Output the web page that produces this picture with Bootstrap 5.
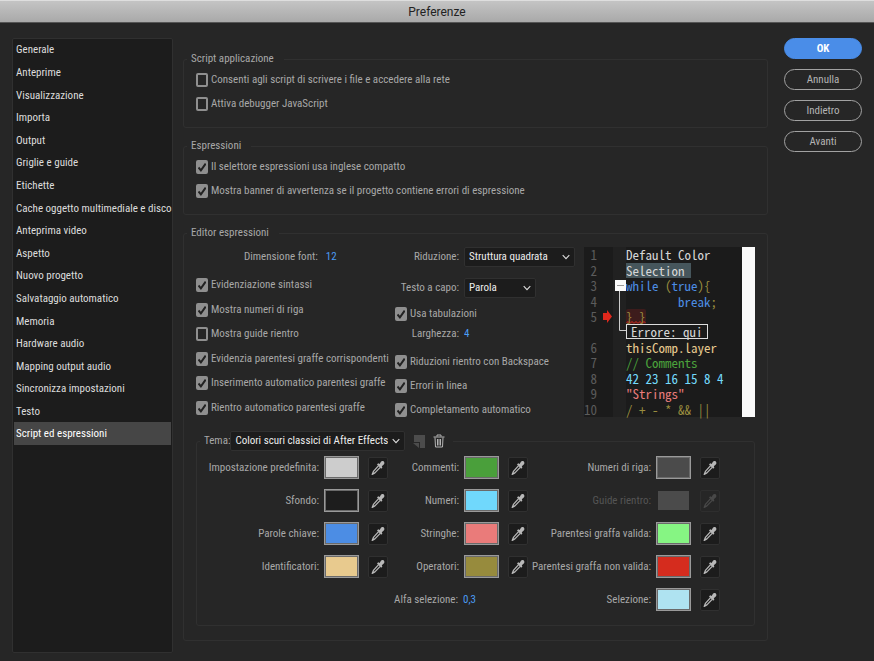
<!DOCTYPE html>
<html lang="it">
<head>
<meta charset="utf-8">
<meta name="viewport" content="width=device-width, initial-scale=1">
<title>Preferenze</title>
<link rel="stylesheet" href="https://cdn.jsdelivr.net/npm/bootstrap@5.3.0/dist/css/bootstrap.min.css">
<style>
:root{--panel:#262626;--well:#1c1c1c;--edge:#303030;--ink:#a8a8a8;--bright:#dcdcdc;--link:#4b9cf5}
body{background:var(--panel);color:var(--ink);font:11px/16px "Roboto Condensed","Open Sans",sans-serif}
.titlebar{height:23px;background:linear-gradient(#c4c4c4,#a9a9a9);border-top:1px solid #dedede;border-bottom:1px solid #555;color:#222;font:12px/22px Roboto,sans-serif}
.dialog{padding:15px 12px 8px}
.sidebar{flex:0 0 161px;min-width:0;background:var(--well);border:1px solid var(--edge);border-radius:2px;padding:0 1px}
.sections{height:406px}
.sections a{flex:1;padding:0 2px;border:0;background:none;color:var(--bright);white-space:nowrap;border-radius:0}
.sections a.active{background:#464646}
.content{margin:13px 16px 0 10px;gap:10px}
.group{border:1px solid var(--edge);border-radius:3px;padding:0 3px}
.group>legend{font-size:11px;line-height:16px;padding:0 10px 0 4px;margin:0}
.opts{padding:1px 9px 11px}
.form-check{min-height:24px;padding:0;margin:0;gap:3px}
.form-check .form-check-input{width:12px;height:14px;margin:0;border:2px solid #8f8f8f;border-radius:2px;background-color:transparent;float:none;flex:none}
.form-check .form-check-input:checked{background-color:#8f8f8f;background-image:url("data:image/svg+xml,%3Csvg xmlns='http://www.w3.org/2000/svg' viewBox='0 0 12 14'%3E%3Cpath d='M2.5 7.5l2.4 2.8 4.8-6.6' fill='none' stroke='%23222' stroke-width='2'/%3E%3C/svg%3E");background-size:12px 14px}
.form-check label{white-space:nowrap}
.editor{grid-template-columns:199px 189px 1fr;padding:6px 9px 9px 9px}
.col-a{padding-bottom:2px}
.col-a>.size-row{height:20px;margin-bottom:6px}
.col-a .form-check{flex:1}
.col-b>.d-flex:first-child{margin-bottom:11px}
.numfield{width:24px;border:0;padding:0;background:none;color:var(--link);font-size:11px;line-height:16px}
.form-select{width:auto;height:20px;min-height:0;padding:0 16px 0 4px;font-size:11px;line-height:16px;border:1px solid var(--edge);border-radius:2px;color:#ececec;background-color:var(--well);background-image:url("data:image/svg+xml,%3Csvg xmlns='http://www.w3.org/2000/svg' viewBox='0 0 8 8'%3E%3Cpath d='M.7 2.2L4 5.6l3.3-3.4' fill='none' stroke='%23ddd' stroke-width='1.1'/%3E%3C/svg%3E");background-size:8px 8px;background-position:right 4px center}
.form-select.w-struct{width:111px}
.form-select.w-wrap{width:72px}
.form-select.w-theme{width:175px}
.lab-b{width:64px;text-align:right;margin-right:5px;white-space:nowrap}
.code{height:170px;margin-bottom:5px;background:#1b1b1b;border-right:13px solid #fafafa;font:13px/15px "Noto Sans Mono CJK SC","Liberation Mono",monospace;color:#d6d6d6}
.code .ln{flex:1;min-height:0;white-space:pre}
.code .num{width:29px;padding-right:16px;color:#5c5c5c;display:flex;justify-content:flex-end}
.code .fold{width:13px;align-self:stretch;background:#212121;position:relative}
.fold .box{position:absolute;right:0;top:2px;z-index:1}
.fold .stem{position:absolute;left:6px;top:12px;z-index:1}
.fold .arrow{position:absolute;left:-10px;top:1px}
.sel{background:#46565c;padding-right:6px}
.kw{color:#4c8de4}.op{color:#9a8d3f}.id{color:#e8cb90}.cm{color:#4ba23c}.nu{color:#74dafb}.st{color:#ea7d7b}
.bad{background:#3d1c1c url("data:image/svg+xml,%3Csvg xmlns='http://www.w3.org/2000/svg' width='4' height='3'%3E%3Cpath d='M0 2.500L2 .5l2 2' fill='none' stroke='%23e0281c'/%3E%3C/svg%3E") repeat-x left bottom;border-radius:2px}
.errbox{border:1px solid #ddd;padding:0 4px;line-height:13px}
.theme{margin:0 9px 14px 9px}
.theme>legend{padding:0 8px 0 4px;line-height:20px}
.swatches{grid-template-columns:188fr 140fr 192fr;padding:0 31px 9px 0}
.cell{height:33px;gap:5px}
.cell label{flex:1;text-align:right;white-space:nowrap}
.swatch{width:35px;height:23px;padding:1px;border:1px solid #9a9a9a;background:#6a6a6a;border-radius:0}
.swatch::-webkit-color-swatch-wrapper{padding:0}
.swatch::-webkit-color-swatch{border:0;border-radius:0}
.swatch:disabled{border-color:transparent;background:none;opacity:1}
.pick{width:20px;height:22px;margin-left:4px;padding:0;border:1px solid var(--edge);border-radius:2px;background:var(--well);color:#b8b8b8;line-height:1;display:flex;align-items:center;justify-content:center}
.pick:disabled{background:none;color:#484848;opacity:1;border-color:#2e2e2e}
.dim{color:#555}
.tool{border:0;padding:0;background:none;line-height:1}
.actions{flex:0 0 78px;gap:10px}
.actions .btn{height:21px;padding:0;border:1px solid #a2a2a2;border-radius:11px;color:#b4b4b4;font-size:11px;line-height:19px}
.actions .btn-ok{background:#4a8de8;border-color:#4a8de8;color:#fff;font-weight:700}
</style>
</head>
<body class="d-flex flex-column min-vh-100">
<svg class="d-none" aria-hidden="true"><symbol id="dropper" viewBox="0 0 14 16"><path d="M7.6 5.6L2.4 11.4 1.2 14.4 3.9 12.9 9.2 7.4" fill="none" stroke="currentColor" stroke-width="1.3" stroke-linejoin="round"/><path d="M6 4.400l1.200-1.200 1.400.8 1.500-2.500C11 .5 13.500.9 13.400 3c0 1-.8 1.900-2.600 3.200l.6 1.400-1.200 1.200z" fill="currentColor"/></symbol></svg>
<header class="titlebar text-center">Preferenze</header>
<main class="dialog d-flex flex-grow-1">
<nav class="sidebar" aria-label="Sezioni">
<div class="sections list-group list-group-flush">
<a href="#" class="list-group-item d-flex align-items-center">Generale</a>
<a href="#" class="list-group-item d-flex align-items-center">Anteprime</a>
<a href="#" class="list-group-item d-flex align-items-center">Visualizzazione</a>
<a href="#" class="list-group-item d-flex align-items-center">Importa</a>
<a href="#" class="list-group-item d-flex align-items-center">Output</a>
<a href="#" class="list-group-item d-flex align-items-center">Griglie e guide</a>
<a href="#" class="list-group-item d-flex align-items-center">Etichette</a>
<a href="#" class="list-group-item d-flex align-items-center">Cache oggetto multimediale e disco</a>
<a href="#" class="list-group-item d-flex align-items-center">Anteprima video</a>
<a href="#" class="list-group-item d-flex align-items-center">Aspetto</a>
<a href="#" class="list-group-item d-flex align-items-center">Nuovo progetto</a>
<a href="#" class="list-group-item d-flex align-items-center">Salvataggio automatico</a>
<a href="#" class="list-group-item d-flex align-items-center">Memoria</a>
<a href="#" class="list-group-item d-flex align-items-center">Hardware audio</a>
<a href="#" class="list-group-item d-flex align-items-center">Mapping output audio</a>
<a href="#" class="list-group-item d-flex align-items-center">Sincronizza impostazioni</a>
<a href="#" class="list-group-item d-flex align-items-center">Testo</a>
<a href="#" class="list-group-item d-flex align-items-center active" aria-current="page">Script ed espressioni</a>
</div>
</nav>

<form class="content flex-grow-1 d-flex flex-column">
<fieldset class="group">
<legend class="float-none w-auto">Script applicazione</legend>
<div class="opts">
<div class="form-check d-flex align-items-center"><input class="form-check-input" type="checkbox" id="c1"><label for="c1">Consenti agli script di scrivere i file e accedere alla rete</label></div>
<div class="form-check d-flex align-items-center"><input class="form-check-input" type="checkbox" id="c2"><label for="c2">Attiva debugger JavaScript</label></div>
</div>
</fieldset>
<fieldset class="group">
<legend class="float-none w-auto">Espressioni</legend>
<div class="opts">
<div class="form-check d-flex align-items-center"><input class="form-check-input" type="checkbox" id="c3" checked><label for="c3">Il selettore espressioni usa inglese compatto</label></div>
<div class="form-check d-flex align-items-center"><input class="form-check-input" type="checkbox" id="c4" checked><label for="c4">Mostra banner di avvertenza se il progetto contiene errori di espressione</label></div>
</div>
</fieldset>
<fieldset class="group">
<legend class="float-none w-auto">Editor espressioni</legend>
<div class="editor d-grid">
<div class="col-a d-flex flex-column">
<div class="size-row d-flex align-items-center"><label for="fs" class="ms-5">Dimensione font:</label><input id="fs" class="numfield ms-2" value="12"></div>
<div class="form-check d-flex align-items-center"><input class="form-check-input" type="checkbox" id="e1" checked><label for="e1">Evidenziazione sintassi</label></div>
<div class="form-check d-flex align-items-center"><input class="form-check-input" type="checkbox" id="e2" checked><label for="e2">Mostra numeri di riga</label></div>
<div class="form-check d-flex align-items-center"><input class="form-check-input" type="checkbox" id="e3"><label for="e3">Mostra guide rientro</label></div>
<div class="form-check d-flex align-items-center"><input class="form-check-input" type="checkbox" id="e4" checked><label for="e4">Evidenzia parentesi graffe corrispondenti</label></div>
<div class="form-check d-flex align-items-center"><input class="form-check-input" type="checkbox" id="e5" checked><label for="e5">Inserimento automatico parentesi graffe</label></div>
<div class="form-check d-flex align-items-center"><input class="form-check-input" type="checkbox" id="e6" checked><label for="e6">Rientro automatico parentesi graffe</label></div>
</div>
<div class="col-b d-flex flex-column">
<div class="d-flex align-items-center"><label for="s1" class="lab-b">Riduzione:</label><select id="s1" class="form-select w-struct"><option>Struttura quadrata</option></select></div>
<div class="d-flex align-items-center mb-1"><label for="s2" class="lab-b">Testo a capo:</label><select id="s2" class="form-select w-wrap"><option>Parola</option></select></div>
<div class="form-check d-flex align-items-center"><input class="form-check-input" type="checkbox" id="f1" checked><label for="f1">Usa tabulazioni</label></div>
<div class="d-flex align-items-center"><label for="wd" class="lab-b">Larghezza:</label><input id="wd" class="numfield" value="4"></div>
<div class="mt-auto">
<div class="form-check d-flex align-items-center"><input class="form-check-input" type="checkbox" id="f2" checked><label for="f2">Riduzioni rientro con Backspace</label></div>
<div class="form-check d-flex align-items-center"><input class="form-check-input" type="checkbox" id="f3" checked><label for="f3">Errori in linea</label></div>
<div class="form-check d-flex align-items-center"><input class="form-check-input" type="checkbox" id="f4" checked><label for="f4">Completamento automatico</label></div>
</div>
</div>
<div class="code d-flex flex-column">
<div class="ln d-flex align-items-center"><span class="num">1</span><span class="fold"></span><span>Default Color</span></div>
<div class="ln d-flex align-items-center"><span class="num">2</span><span class="fold"></span><span class="sel">Selection</span></div>
<div class="ln d-flex align-items-center"><span class="num">3</span><span class="fold"><svg class="stem" width="8" height="44" viewBox="0 0 8 44"><path d="M.5 0V40.500H7" fill="none" stroke="#ccc"/></svg><svg class="box" width="11" height="11" viewBox="0 0 11 11"><path fill="#fafafa" d="M0 0h11v11H0z"/><path d="M2 5.500h7" stroke="#999"/></svg></span><span><span class="kw">while</span> <span class="op">(</span><span class="kw">true</span><span class="op">){</span></span></div>
<div class="ln d-flex align-items-center"><span class="num">4</span><span class="fold"></span><span>        <span class="kw">break</span><span class="op">;</span></span></div>
<div class="ln d-flex align-items-center"><span class="num">5</span><span class="fold"><svg class="arrow" width="9" height="13" viewBox="0 0 9 13"><path fill="#e0281c" d="M0 3h4V0l5 6.500L4 13v-3H0z"/></svg></span><span class="op bad">} }</span></div>
<div class="ln d-flex align-items-center"><span class="num"></span><span class="fold"></span><span class="errbox">Errore: qui</span></div>
<div class="ln d-flex align-items-center"><span class="num">6</span><span class="fold"></span><span class="id">thisComp.layer</span></div>
<div class="ln d-flex align-items-center"><span class="num">7</span><span class="fold"></span><span class="cm">// Comments</span></div>
<div class="ln d-flex align-items-center"><span class="num">8</span><span class="fold"></span><span class="nu">42 23 16 15 8 4</span></div>
<div class="ln d-flex align-items-center"><span class="num">9</span><span class="fold"></span><span class="st">"Strings"</span></div>
<div class="ln d-flex align-items-center"><span class="num">10</span><span class="fold"></span><span class="op">/ + - * &amp;&amp; ||</span></div>
</div>
</div>
<fieldset class="group theme">
<legend class="float-none w-auto d-flex align-items-center"><label for="th">Tema:</label><select id="th" class="form-select w-theme"><option>Colori scuri classici di After Effects</option></select>
<button type="button" class="tool ms-2" aria-label="Nuovo tema" disabled><svg width="12" height="13" viewBox="0 0 12 13"><path fill="#4c4c4c" d="M1 0h11v13H7V7H1z"/><path fill="#4c4c4c" d="M0 8h6v5z"/></svg></button>
<button type="button" class="tool ms-2" aria-label="Elimina tema"><svg width="12" height="14" viewBox="0 0 12 14"><path d="M.5 3h11M4 2.500V1h4v1.500M2 3.500l.5 9.500h7l.5-9.500M4.500 5v6.500M6 5v6.500M7.500 5v6.500" fill="none" stroke="#b4b4b4"/></svg></button>
</legend>
<div class="swatches d-grid" id="swatches"></div>
</fieldset>
</fieldset>
</form>

<div class="actions d-flex flex-column">
<button type="button" class="btn btn-ok">OK</button>
<button type="button" class="btn">Annulla</button>
<button type="button" class="btn">Indietro</button>
<button type="button" class="btn">Avanti</button>
</div>
</main>
<script src="https://cdn.jsdelivr.net/npm/bootstrap@5.3.0/dist/js/bootstrap.bundle.min.js"></script>
<script>
const colours = [
  ['Impostazione predefinita', '#cdcdcd'], ['Commenti', '#4a9f3b'], ['Numeri di riga', '#4b4b4b'],
  ['Sfondo', '#1d1d1d'], ['Numeri', '#70d8fc'], ['Guide rientro', '#4b4b4b', true],
  ['Parole chiave', '#4c8de4'], ['Stringhe', '#ea7b7a'], ['Parentesi graffa valida', '#86f583'],
  ['Identificatori', '#e8ca8e'], ['Operatori', '#978b3d'], ['Parentesi graffa non valida', '#d52c1e'],
  null, ['Alfa selezione', null], ['Selezione', '#afe3f1']
];
document.getElementById('swatches').innerHTML = colours.map((c, i) => {
  if (!c) return '<div class="cell"></div>';
  const off = c[2] ? ' disabled' : '';
  const label = `<label for="k${i}"${off && ' class="dim"'}>${c[0]}:</label>`;
  const field = c[1]
    ? `<input type="color" class="swatch" id="k${i}" value="${c[1]}"${off}><button type="button" class="pick" aria-label="Contagocce: ${c[0]}"${off}><svg width="14" height="16"><use href="#dropper"/></svg></button>`
    : `<input id="k${i}" class="numfield" value="0,3"><span class="pick invisible ms-3"></span>`;
  return `<div class="cell d-flex align-items-center">${label}${field}</div>`;
}).join('');
</script>
</body>
</html>
